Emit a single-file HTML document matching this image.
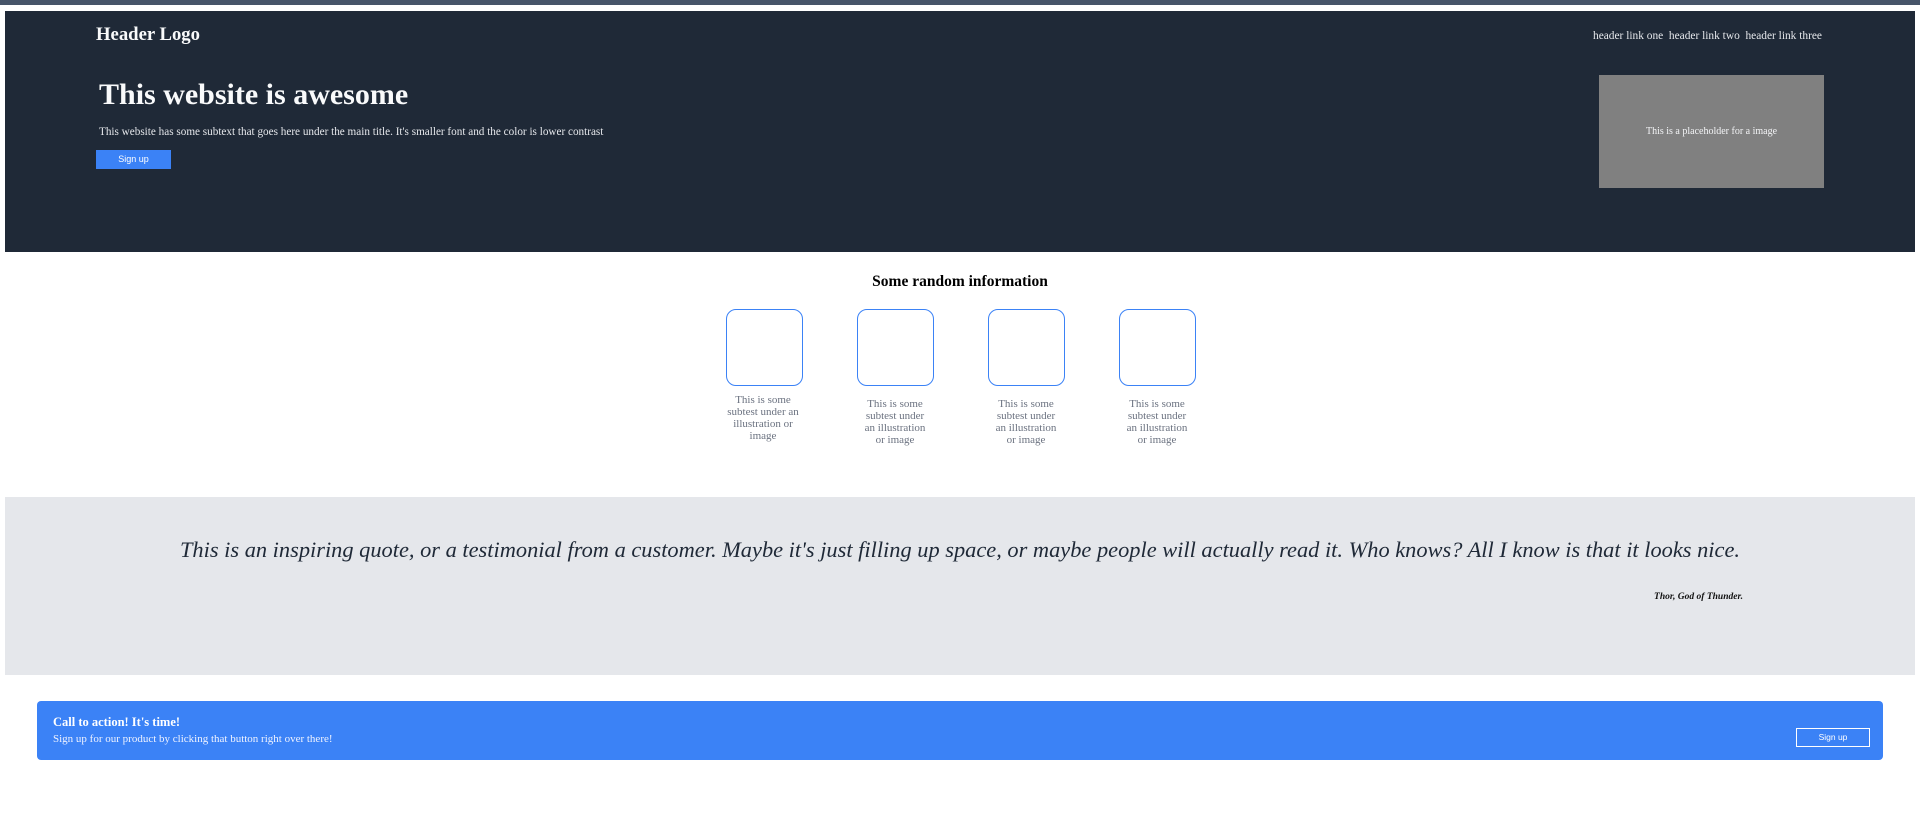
<!DOCTYPE html>
<html><head><meta charset="utf-8"><style>
*{margin:0;padding:0;box-sizing:border-box}
body{width:1920px;height:816px;background:#fff;font-family:"Liberation Serif",serif;position:relative;overflow:hidden}
.abs{position:absolute}
.topbar{left:0;top:0;width:1920px;height:5px;background:#475569}
.hdr{left:5px;top:11px;width:1910px;height:241px;background:#1f2937}
.logo{left:96px;top:24px;font-size:18.7px;font-weight:bold;color:#f9fafb}
.links{left:1593px;top:30px;font-size:11.4px;color:#e5e7eb;white-space:nowrap}
.title{left:99px;top:78px;font-size:30px;font-weight:bold;color:#f9fafb;white-space:nowrap}
.sub{left:99px;top:126px;font-size:11.2px;color:#e5e7eb;white-space:nowrap}
.btn{left:96px;top:150px;width:75px;height:19px;background:#3b82f6;color:#fff;font-family:"Liberation Sans",sans-serif;font-size:9px;text-align:center;line-height:19px}
.ph{left:1599px;top:75px;width:225px;height:113px;background:#808080;color:#f3f4f6;font-size:10px;text-align:center;line-height:113px}
.h2{left:0;width:1920px;top:273px;text-align:center;font-size:15.5px;font-weight:bold;color:#000}
.box{width:77px;height:77px;top:309px;border:1px solid #3b82f6;border-radius:10px}
.cap{font-size:11px;line-height:12px;color:#6b7280;text-align:center;width:100px}
.quote{left:5px;top:497px;width:1910px;height:178px;background:#e5e7eb}
.qt{left:0;width:1920px;top:537px;text-align:center;font-size:22.4px;font-style:italic;color:#1f2937;white-space:nowrap}
.att{right:177px;top:592px;font-size:9.5px;font-style:italic;font-weight:bold;color:#111}
.cta{left:37px;top:701px;width:1846px;height:59px;background:#3b82f6;border-radius:4px}
.ct1{left:53px;top:715px;font-size:12.5px;font-weight:bold;color:#fff}
.ct2{left:53px;top:733px;font-size:11px;color:#eef2ff}
.cbtn{left:1796px;top:728px;width:74px;height:19px;border:1px solid #fff;color:#fff;font-family:"Liberation Sans",sans-serif;font-size:8.5px;text-align:center;line-height:17px}
</style></head><body>
<div class="abs topbar"></div>
<div class="abs hdr"></div>
<div class="abs logo">Header Logo</div>
<div class="abs links">header link one&nbsp; header link two&nbsp; header link three</div>
<div class="abs title">This website is awesome</div>
<div class="abs sub">This website has some subtext that goes here under the main title. It's smaller font and the color is lower contrast</div>
<div class="abs btn">Sign up</div>
<div class="abs ph">This is a placeholder for a image</div>
<div class="abs h2">Some random information</div>
<div class="abs box" style="left:726px"></div>
<div class="abs box" style="left:857px"></div>
<div class="abs box" style="left:988px"></div>
<div class="abs box" style="left:1119px"></div>
<div class="abs cap" style="left:713px;top:394px">This is some<br>subtest under an<br>illustration or<br>image</div>
<div class="abs cap" style="left:845px;top:398px">This is some<br>subtest under<br>an illustration<br>or image</div>
<div class="abs cap" style="left:976px;top:398px">This is some<br>subtest under<br>an illustration<br>or image</div>
<div class="abs cap" style="left:1107px;top:398px">This is some<br>subtest under<br>an illustration<br>or image</div>
<div class="abs quote"></div>
<div class="abs qt">This is an inspiring quote, or a testimonial from a customer. Maybe it's just filling up space, or maybe people will actually read it. Who knows? All I know is that it looks nice.</div>
<div class="abs att">Thor, God of Thunder.</div>
<div class="abs cta"></div>
<div class="abs ct1">Call to action! It's time!</div>
<div class="abs ct2">Sign up for our product by clicking that button right over there!</div>
<div class="abs cbtn">Sign up</div>
</body></html>
